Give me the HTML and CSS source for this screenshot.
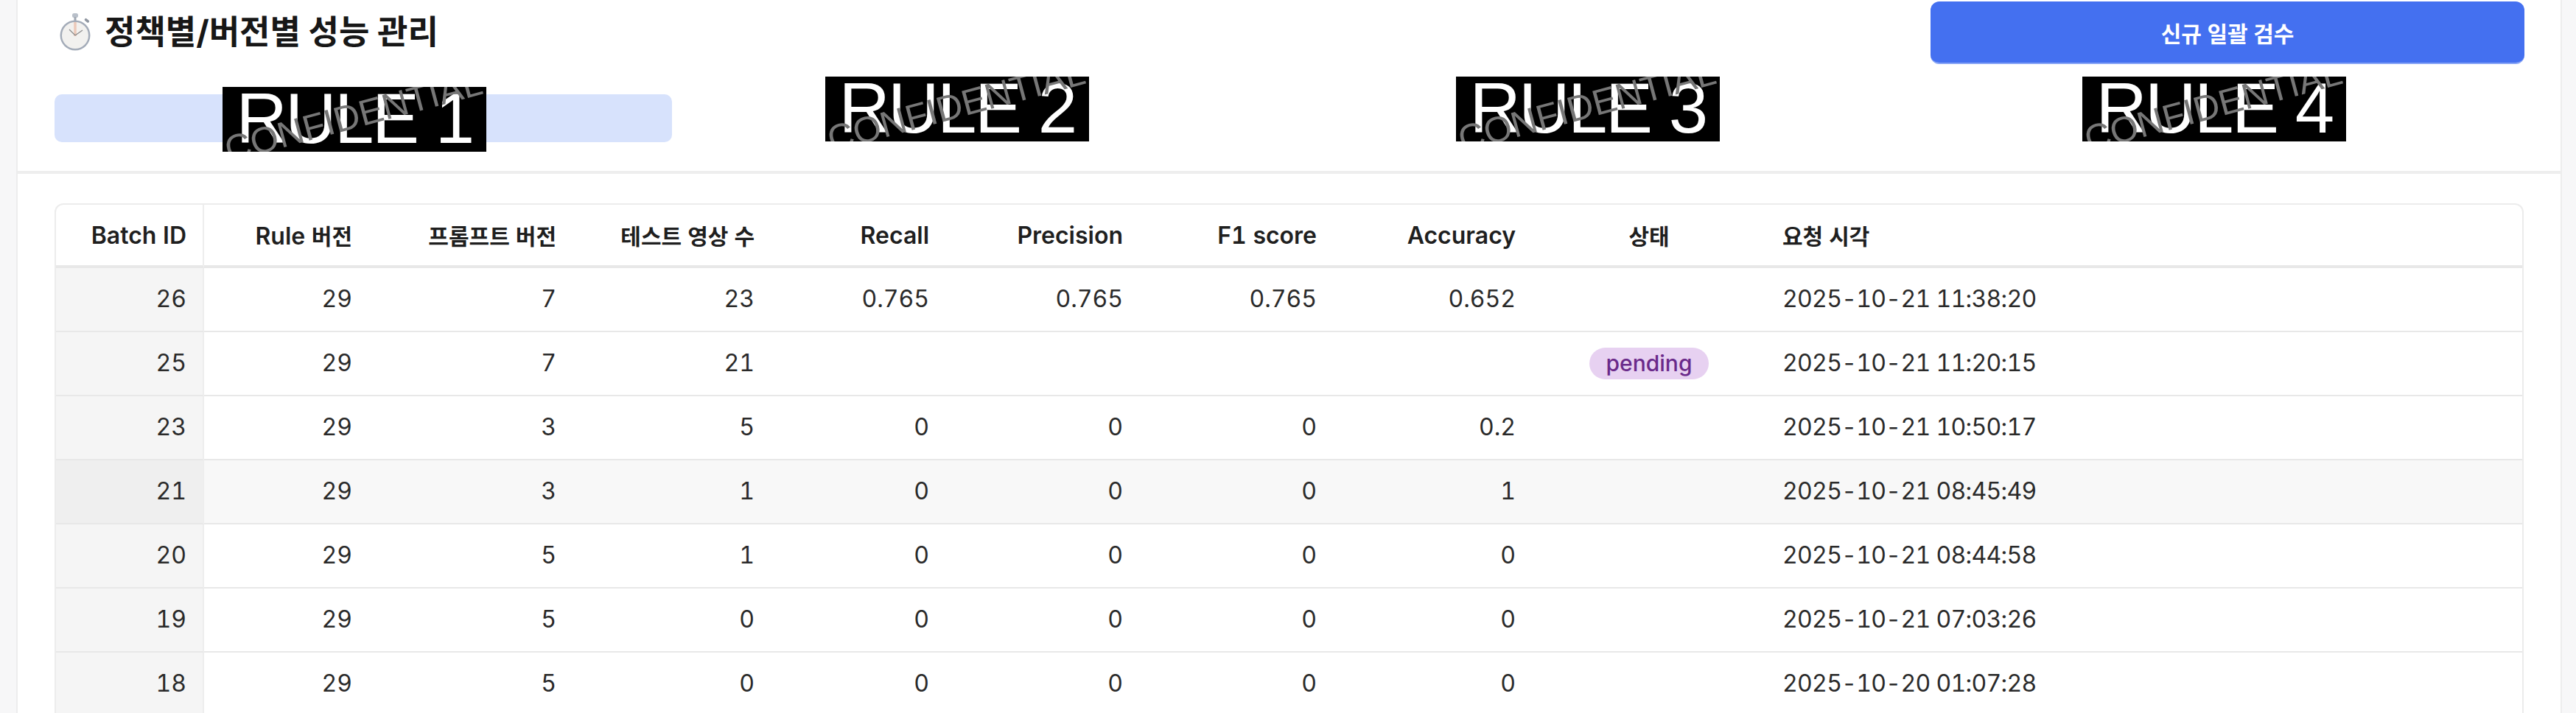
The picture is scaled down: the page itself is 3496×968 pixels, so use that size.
FILE: index.html
```html
<!DOCTYPE html>
<html lang="ko">
<head>
<meta charset="utf-8">
<title>정책별/버전별 성능 관리</title>
<link rel="stylesheet" href="styles.css">
</head>
<body>
<main class="panel">
  <section class="head">
    <div class="title-row">
      <h1 class="title">
        <svg class="stopwatch" viewBox="0 0 44 52" aria-hidden="true">
          <rect x="18" y="1" width="8" height="6" rx="2.5" fill="#b9c0ca"/>
          <rect x="20.5" y="6" width="3" height="5" fill="#a0a7b2"/>
          <rect x="35" y="9" width="7" height="3.5" rx="1.5" fill="#8f96a1" transform="rotate(40 38 10)"/>
          <circle cx="22" cy="31" r="20.5" fill="#a3abb8"/>
          <circle cx="22" cy="31" r="18" fill="#f2f1ef"/>
          <path d="M22 13v19" stroke="#ecc9b9" stroke-width="3.5"/>
          <path d="M22 31l10-7M22 31l-8-8" stroke="#8a8a8a" stroke-width="1.2" fill="none"/>
        </svg>
        <span>정책별/버전별 성능 관리</span>
      </h1>
      <button class="primary" type="button">신규 일괄 검수</button>
    </div>
    <div class="tabs">
      <div class="tab tab-active"><span class="redact r1">RULE 1<i class="mark">CONFIDENTIAL</i></span></div>
      <div class="tab"><span class="redact r2">RULE 2<i class="mark">CONFIDENTIAL</i></span></div>
      <div class="tab"><span class="redact r3">RULE 3<i class="mark">CONFIDENTIAL</i></span></div>
      <div class="tab"><span class="redact r4">RULE 4<i class="mark">CONFIDENTIAL</i></span></div>
    </div>
  </section>
  <section class="body">
    <div class="table-wrap">
      <table class="grid">
        <colgroup>
          <col class="c1"><col class="c2"><col class="c3"><col class="c4"><col class="c5"><col class="c6"><col class="c7"><col class="c8"><col class="c9"><col class="c10">
        </colgroup>
        <thead>
          <tr><th>Batch ID</th><th>Rule <span class="ko">버전</span></th><th><span class="ko">프롬프트 버전</span></th><th><span class="ko">테스트 영상 수</span></th><th>Recall</th><th>Precision</th><th>F1 score</th><th>Accuracy</th><th class="center"><span class="ko">상태</span></th><th class="left"><span class="ko">요청 시각</span></th></tr>
        </thead>
        <tbody>
          <tr><td>26</td><td>29</td><td>7</td><td>23</td><td>0.765</td><td>0.765</td><td>0.765</td><td>0.652</td><td class="center"></td><td class="left">2025-10-21 11:38:20</td></tr>
          <tr><td>25</td><td>29</td><td>7</td><td>21</td><td></td><td></td><td></td><td></td><td class="center"><span class="pill">pending</span></td><td class="left">2025-10-21 11:20:15</td></tr>
          <tr><td>23</td><td>29</td><td>3</td><td>5</td><td>0</td><td>0</td><td>0</td><td>0.2</td><td class="center"></td><td class="left">2025-10-21 10:50:17</td></tr>
          <tr class="hover"><td>21</td><td>29</td><td>3</td><td>1</td><td>0</td><td>0</td><td>0</td><td>1</td><td class="center"></td><td class="left">2025-10-21 08:45:49</td></tr>
          <tr><td>20</td><td>29</td><td>5</td><td>1</td><td>0</td><td>0</td><td>0</td><td>0</td><td class="center"></td><td class="left">2025-10-21 08:44:58</td></tr>
          <tr><td>19</td><td>29</td><td>5</td><td>0</td><td>0</td><td>0</td><td>0</td><td>0</td><td class="center"></td><td class="left">2025-10-21 07:03:26</td></tr>
          <tr><td>18</td><td>29</td><td>5</td><td>0</td><td>0</td><td>0</td><td>0</td><td>0</td><td class="center"></td><td class="left">2025-10-20 01:07:28</td></tr>
        </tbody>
      </table>
    </div>
  </section>
</main>
</body>
</html>
```

FILE: styles.css
```css
* { box-sizing: border-box; }
html, body { margin: 0; height: 100%; }
body {
  height: 968px;
  overflow: hidden;
  background: #f7f7f8;
  font-family: Inter, "Noto Sans CJK KR", sans-serif;
  color: #1f1f1f;
  padding: 0 19px 0 22px;
}
.panel {
  background: #fff;
  border-left: 2px solid #ededed;
  border-right: 2px solid #ededed;
  height: 968px;
  overflow: hidden;
}
.head {
  height: 236px;
  border-bottom: 4px solid #eeeeee;
  padding: 0 49px 0 50px;
}
.title-row {
  display: flex;
  justify-content: space-between;
  height: 104px;
  padding-top: 2px;
}
.title {
  margin: 0;
  display: flex;
  align-items: flex-start;
  gap: 18px;
  font-size: 45px;
  line-height: 54px;
  font-weight: 700;
  color: #171717;
  padding: 15px 0 0 6px;
}
.stopwatch { width: 44px; height: 52px; }
.primary {
  width: 806px;
  height: 85px;
  border: 0;
  border-bottom: 2px solid #86a4f6;
  border-radius: 12px;
  background: #4470f0;
  color: #fff;
  font: 600 30px Inter, "Noto Sans CJK KR", sans-serif;
}
.tabs {
  display: grid;
  grid-template-columns: 838px 742px 938px 786px;
  column-gap: 16px;
}
.tab {
  height: 65px;
  margin-top: 24px;
  border-radius: 10px;
  position: relative;
}
.tab-active { background: #d7e2fc; }
.redact {
  position: absolute;
  top: -24px;
  width: 358px;
  height: 88px;
  background: #000;
  color: #fff;
  font-family: "Liberation Sans", sans-serif;
  font-size: 96px;
  letter-spacing: -2.5px;
  line-height: 86px;
  text-align: center;
  overflow: hidden;
  white-space: nowrap;
}
.r1 { left: 228px; top: -10px; }
.r2 { left: 192px; }
.r3 { left: 290px; }
.r4 { left: 186px; }
.mark {
  position: absolute;
  left: -2px;
  top: 15px;
  font-style: normal;
  font-size: 49px;
  letter-spacing: 0;
  line-height: 48px;
  color: #777;
  transform: rotate(-15deg);
}
.body { padding: 40px 50px 0 50px; }
.table-wrap {
  border: 2px solid #ececec;
  border-bottom: 0;
  border-radius: 12px 12px 0 0;
  overflow: hidden;
}
.grid {
  width: 100%;
  border-collapse: separate;
  border-spacing: 0;
  table-layout: fixed;
  font-size: 32px;
  font-variant-numeric: tabular-nums;
}
.c1 { width: 201px; }
.c2 { width: 225px; }
.c3 { width: 277px; }
.c4 { width: 269px; }
.c5 { width: 237px; }
.c6 { width: 263px; }
.c7 { width: 263px; }
.c8 { width: 270px; }
.c9 { width: 314px; }
th, td {
  text-align: right;
  padding: 0 24px 0 0;
  height: 87px;
  border-bottom: 2px solid #e8e8e8;
  white-space: nowrap;
}
th { height: 86px; font-weight: 600; border-bottom-width: 4px; }
td { font-weight: 400; color: #2a2a2a; padding-bottom: 2px; }
.ko { font-size: 30px; }
th:first-child, td:first-child { border-right: 2px solid #eeeeee; padding-right: 22px; }
td:first-child { background: #f5f5f5; }
.hover td { background: #f8f8f8; }
.hover td:first-child { background: #efefef; }
.center { text-align: center; padding: 0; }
.left { text-align: left; padding: 0 0 0 24px; }
td.left { letter-spacing: -0.7px; padding-bottom: 2px; }
.pill {
  display: inline-block;
  height: 43px;
  line-height: 42px;
  padding: 0 23px;
  border-radius: 22px;
  background: #e7d1f1;
  color: #6a2a8a;
  font-size: 30px;
  font-weight: 500;
}
```
